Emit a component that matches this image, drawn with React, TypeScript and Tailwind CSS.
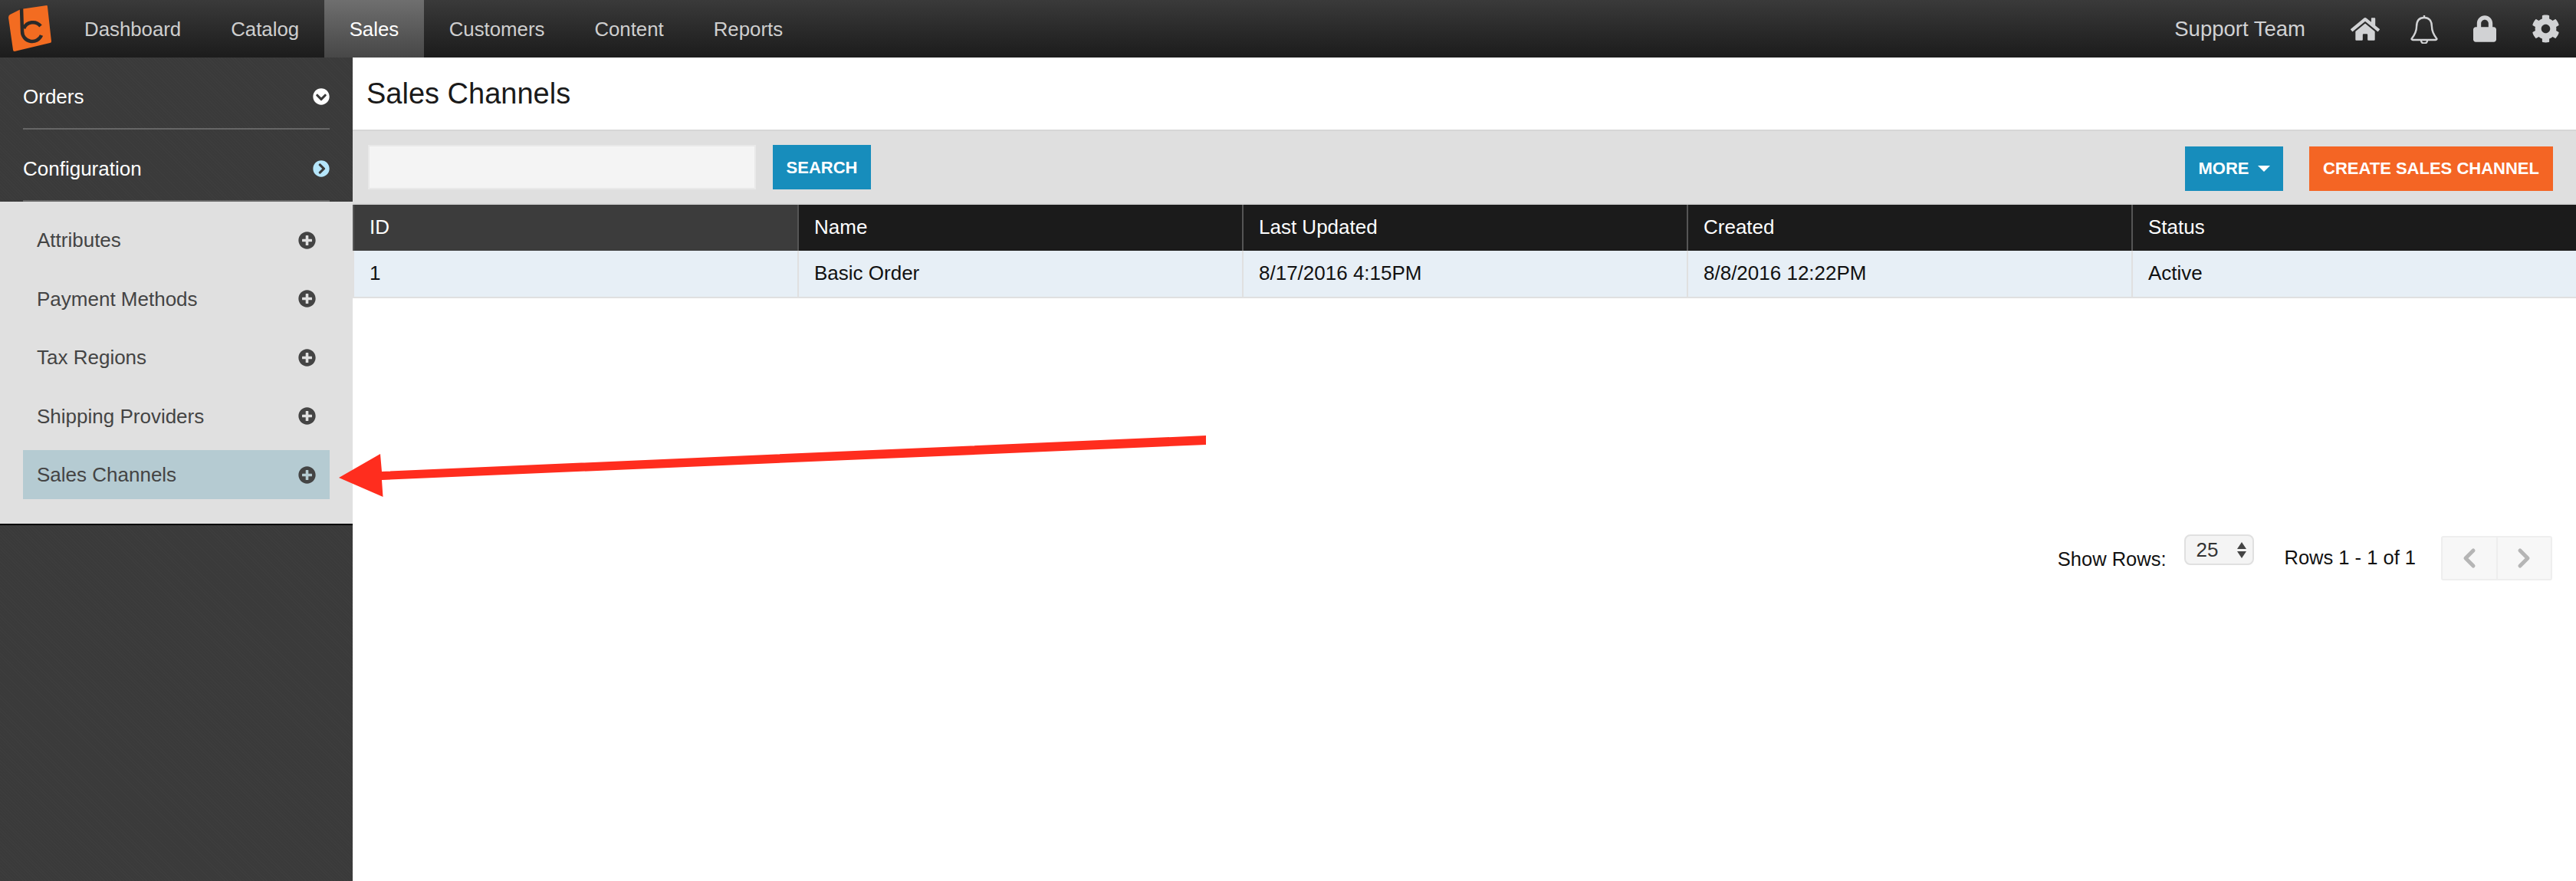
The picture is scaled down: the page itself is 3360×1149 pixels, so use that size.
import { FaChevronCircleDown, FaChevronCircleRight, FaCog, FaHome, FaLock, FaPlusCircle } from "react-icons/fa";
import { ChevronLeft, ChevronRight } from "lucide-react";

const navItems = ["Dashboard", "Catalog", "Sales", "Customers", "Content", "Reports"];
const configItems = ["Attributes", "Payment Methods", "Tax Regions", "Shipping Providers", "Sales Channels"];
const columns = ["ID", "Name", "Last Updated", "Created", "Status"];
const row = ["1", "Basic Order", "8/17/2016 4:15PM", "8/8/2016 12:22PM", "Active"];

function Logo() {
  return (
    <svg viewBox="0 0 70 70" className="h-[70px] w-[70px] shrink-0">
      <path d="M27 12 L61 7 Q62 7 62 9 L67 54 Q67 56 65 56 L19 67 Q17 67 17 65 L11 23 Q11 20 13 19 Z" fill="#f36c21" />
      <path d="M28 11 L29 41 A13 13 0 0 0 54 46" fill="none" stroke="#2a2a2a" strokeWidth="4.5" />
      <path d="M53 34 A13 13 0 0 0 31 37" fill="none" stroke="#2a2a2a" strokeWidth="4.5" />
    </svg>
  );
}

function Bell() {
  return (
    <svg viewBox="0 0 36 38" className="h-[38px] w-[36px]" fill="none" stroke="#d1d2d4" strokeWidth="2.4">
      <path d="M18 4 C10 4 8 10 8 16 C8 23 5 27 2 31 C1 32 2 33 3 33 L33 33 C34 33 35 32 34 31 C31 27 28 23 28 16 C28 10 26 4 18 4 Z" />
      <path d="M18 1 L18 4" />
      <path d="M14 34 A4 3.5 0 0 0 22 34" />
    </svg>
  );
}

function TopBar() {
  return (
    <div className="flex h-[75px] shrink-0 items-stretch bg-linear-to-b from-[#3a3a3a] to-[#1c1c1c]">
      <Logo />
      <div className="ml-[7.5px] flex items-stretch text-[25.8px]">
        {navItems.map((item) => (
          <div
            key={item}
            className={
              item === "Sales"
                ? "flex items-center bg-linear-to-b from-[#6f6f6f] to-[#474747] px-[33px] font-medium text-white"
                : "flex items-center px-[32.5px] text-[#cfcfcf]"
            }
          >
            {item}
          </div>
        ))}
      </div>
      <div className="ml-auto flex items-center pr-[21px] text-[#d1d2d4]">
        <span className="mr-[59px] text-[27.5px]">Support Team</span>
        <FaHome className="mr-[40px] h-[38px] w-[38px]" />
        <span className="mr-[46px]">
          <Bell />
        </span>
        <FaLock className="mr-[46px] h-[35px] w-[30px]" />
        <FaCog className="h-[37px] w-[37px]" />
      </div>
    </div>
  );
}

function Sidebar() {
  return (
    <div className="flex w-[460px] shrink-0 flex-col bg-[#3b3b3b] bg-[repeating-linear-gradient(45deg,#3d3d3d_0px,#3d3d3d_1px,#3a3a3a_1px,#3a3a3a_3px)]">
      <div className="px-[30px]">
        <div className="flex h-[94px] items-center justify-between border-b-2 border-[#666666] pt-[9px] text-white">
          <span>Orders</span>
          <FaChevronCircleDown className="h-[22px] w-[22px] text-white" />
        </div>
        <div className="flex h-[94px] items-center justify-between border-b-2 border-[#666666] pt-[9px] text-white">
          <span>Configuration</span>
          <FaChevronCircleRight className="h-[22px] w-[22px] text-[#b5e6fb]" />
        </div>
      </div>
      <div className="flex h-[422px] flex-col gap-[12.5px] border-b-2 border-black bg-[#e0e0e0] px-[30px] pt-[18px]">
        {configItems.map((item) => (
          <div
            key={item}
            className={
              item === "Sales Channels"
                ? "flex h-[64px] items-center justify-between bg-[#b5cbd2] pr-[18px] pl-[18px] text-[#444444]"
                : "flex h-[64px] items-center justify-between pr-[18px] pl-[18px] text-[#444444]"
            }
          >
            <span>{item}</span>
            <FaPlusCircle className="h-[23px] w-[23px] text-[#444444]" />
          </div>
        ))}
      </div>
    </div>
  );
}

function Toolbar() {
  return (
    <div className="flex h-[98px] shrink-0 items-start justify-between border-t-2 border-b-2 border-[#d6d6d6] bg-[#dfdfdf] pt-[18px] pr-[30px] pl-[20px]">
      <div className="flex gap-[22px]">
        <div className="h-[58px] w-[506px] border-2 border-[#e9e9e9] bg-[#f4f4f4]" />
        <div className="flex h-[58px] w-[128px] items-center justify-center bg-[#178dbc] pt-[2px] text-[22px] font-bold text-white">
          SEARCH
        </div>
      </div>
      <div className="mt-[2px] flex gap-[34px]">
        <div className="flex h-[58px] w-[128px] items-center justify-center gap-[11px] bg-[#178dbc] text-[22px] font-bold text-white">
          <span>MORE</span>
          <span className="h-0 w-0 border-x-[8px] border-t-[8px] border-x-transparent border-t-white" />
        </div>
        <div className="flex h-[58px] w-[318px] items-center justify-center bg-[#f46524] text-[22px] font-bold text-white">
          CREATE SALES CHANNEL
        </div>
      </div>
    </div>
  );
}

function DataTable() {
  return (
    <div className="shrink-0">
      <div className="grid h-[60px] grid-cols-5 bg-[#1b1b1b] text-white">
        {columns.map((col, i) => (
          <div
            key={col}
            className={
              i === 0
                ? "flex items-center border-l-2 border-[#555555] bg-[#3c3c3c] pb-[2px] pl-[20px]"
                : "flex items-center border-l-2 border-[#555555] pb-[2px] pl-[20px]"
            }
          >
            {col}
          </div>
        ))}
      </div>
      <div className="grid h-[62px] grid-cols-5 border-b-2 border-[#e0e0e0] bg-[#e7eff6] text-[#111111]">
        {row.map((cell, i) => (
          <div key={i} className="flex items-center border-l-2 border-[#e0e0e0] pb-[2px] pl-[20px]">
            {cell}
          </div>
        ))}
      </div>
    </div>
  );
}

function Pagination() {
  return (
    <div className="mt-[308px] flex items-start justify-end pr-[31px] text-[#111111]">
      <span className="mt-[17px] text-[25.5px]">Show Rows:</span>
      <div className="ml-[23px] flex h-[40px] w-[91px] items-center justify-between rounded-[8px] border-2 border-[#e0e0e0] bg-[#f4f4f4] pr-[8px] pl-[14px] text-[26px] text-[#333333]">
        <span>25</span>
        <span className="flex flex-col gap-[3px]">
          <span className="h-0 w-0 border-x-[6px] border-b-[9px] border-x-transparent border-b-[#444444]" />
          <span className="h-0 w-0 border-x-[6px] border-t-[9px] border-x-transparent border-t-[#444444]" />
        </span>
      </div>
      <span className="mt-[15px] ml-[40px] text-[25.5px]">Rows 1 - 1 of 1</span>
      <div className="mt-[2px] ml-[33px] flex h-[58px] w-[145px] rounded-[3px] border-2 border-[#eeeeee] bg-[#f7f7f7]">
        <div className="flex flex-1 items-center justify-center border-r-2 border-[#eeeeee]">
          <ChevronLeft className="h-[40px] w-[40px] text-[#b5b5b5]" strokeWidth={3} />
        </div>
        <div className="flex flex-1 items-center justify-center">
          <ChevronRight className="h-[40px] w-[40px] text-[#b5b5b5]" strokeWidth={3} />
        </div>
      </div>
    </div>
  );
}

export default function App() {
  return (
    <div className="relative flex h-[1149px] flex-col overflow-hidden bg-white font-['Liberation_Sans',Arial,sans-serif] text-[26px] leading-[30px]">
      <TopBar />
      <div className="flex flex-1">
        <Sidebar />
        <div className="flex min-w-0 flex-1 flex-col">
          <div className="flex h-[94px] shrink-0 items-center pl-[18px] text-[38px] text-[#1a1a1a]">
            Sales Channels
          </div>
          <Toolbar />
          <DataTable />
          <Pagination />
        </div>
      </div>
      {/* annotation arrow */}
      <svg className="absolute top-0 left-0 h-[1149px] w-[3360px]" viewBox="0 0 3360 1149">
        <polygon
          points="1573,568 1573,580 498,626 499.5,648 442,623 496,592 498,615"
          fill="#ff2d1e"
        />
      </svg>
    </div>
  );
}
